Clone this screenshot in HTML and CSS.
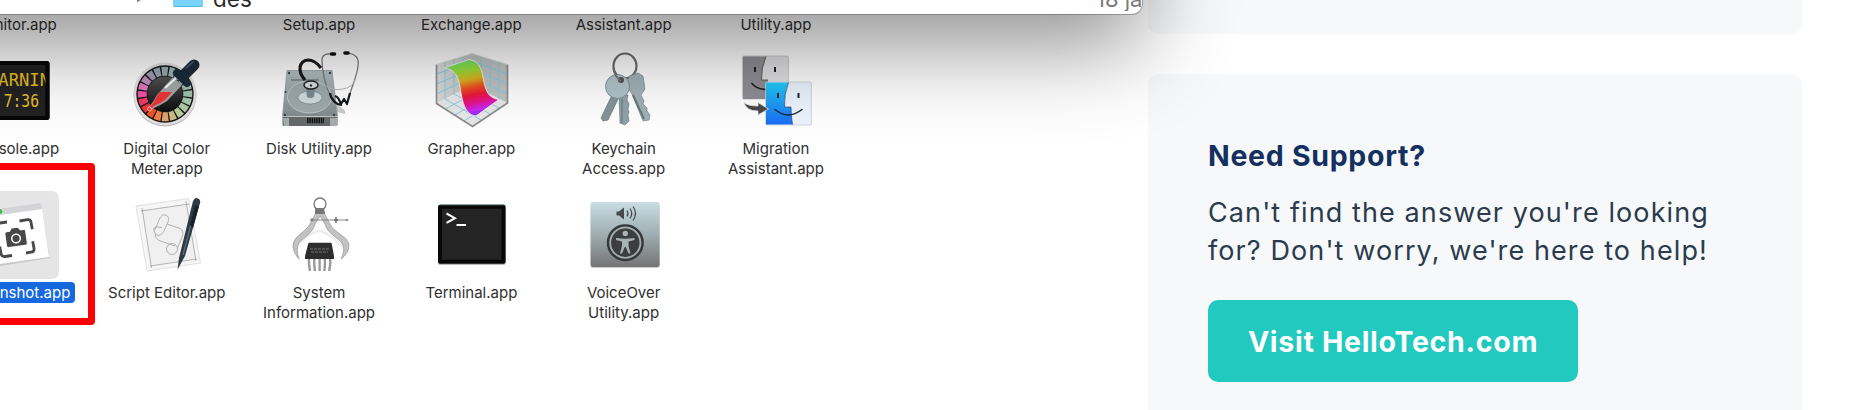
FILE: index.html
```
<!DOCTYPE html>
<html lang="en">
<head>
<meta charset="utf-8">
<title>Utilities</title>
<link rel="stylesheet" href="styles.css">
</head>
<body>
<div class="page">
<main class="article">
  <div class="window">
    <svg class="disclosure" viewBox="0 0 10 14"><path d="M0 0 10 7 0 14z" fill="#7f7f7f"/></svg>
    <span class="folder"></span>
    <span class="folder-name">des</span>
    <span class="folder-date">18 jan</span>
  </div>
  <div class="apps">
    <div class="app first"><span class="label">Activity<br>Monitor.app</span></div>
    <div class="app first"></div>
    <div class="app first"><span class="label">Boot Camp<br>Setup.app</span></div>
    <div class="app first"><span class="label">Bluetooth File<br>Exchange.app</span></div>
    <div class="app first"><span class="label">Boot Camp<br>Assistant.app</span></div>
    <div class="app first"><span class="label">ColorSync<br>Utility.app</span></div>

    <div class="app">
      <svg class="icon" viewBox="0 0 76 76">
        <rect x="6" y="10" width="67.5" height="59" rx="2" fill="#080808"/>
        <rect x="9" y="14" width="60.5" height="51" fill="#222"/>
        <g class="console-text" fill="#e8bf27">
          <text x="12" y="35" textLength="62" lengthAdjust="spacingAndGlyphs">WARNIN</text>
          <text x="10" y="56" textLength="53" lengthAdjust="spacingAndGlyphs">Y 7:36</text>
        </g>
        <path d="M69.500 12H73.500V67H69.500z" fill="#080808"/>
      </svg>
      <span class="label">Console.app</span>
    </div>
    <div class="app">
      <svg class="icon" viewBox="0 0 76 76">
        <defs>
          <circle id="seg" cx="36" cy="43" r="22.8" fill="none" stroke-width="9" pathLength="20" stroke-dasharray=".84 19.16" transform="rotate(-98 36 43)"/>
          <linearGradient id="dial" x1="0" y1="0" x2="0" y2="1"><stop offset="0" stop-color="#555"/><stop offset="1" stop-color="#0c0c0c"/></linearGradient>
        </defs>
        <circle cx="36" cy="44" r="31.5" fill="#b4b4b4"/>
        <circle cx="36" cy="43" r="31.5" fill="#e4e4e4"/>
        <circle cx="36" cy="43" r="28.7" fill="#151515"/>
        <use href="#seg" stroke="#9babb3"/>
        <use href="#seg" stroke="#9bb5b5" transform="rotate(18 36 43)"/>
        <use href="#seg" stroke="#9ebab3" transform="rotate(36 36 43)"/>
        <use href="#seg" stroke="#9ebab0" transform="rotate(54 36 43)"/>
        <use href="#seg" stroke="#a0c0b0" transform="rotate(72 36 43)"/>
        <use href="#seg" stroke="#a3c6b0" transform="rotate(90 36 43)"/>
        <use href="#seg" stroke="#a8ccb0" transform="rotate(108 36 43)"/>
        <use href="#seg" stroke="#b0cda6" transform="rotate(126 36 43)"/>
        <use href="#seg" stroke="#bccd9b" transform="rotate(144 36 43)"/>
        <use href="#seg" stroke="#ccbf84" transform="rotate(162 36 43)"/>
        <use href="#seg" stroke="#e3a46c" transform="rotate(180 36 43)"/>
        <use href="#seg" stroke="#f27f43" transform="rotate(198 36 43)"/>
        <use href="#seg" stroke="#f65229" transform="rotate(216 36 43)"/>
        <use href="#seg" stroke="#f43437" transform="rotate(234 36 43)"/>
        <use href="#seg" stroke="#f23a6c" transform="rotate(252 36 43)"/>
        <use href="#seg" stroke="#f752a4" transform="rotate(270 36 43)"/>
        <use href="#seg" stroke="#e078bc" transform="rotate(288 36 43)"/>
        <use href="#seg" stroke="#bd90bb" transform="rotate(306 36 43)"/>
        <use href="#seg" stroke="#a59bb5" transform="rotate(324 36 43)"/>
        <use href="#seg" stroke="#9ba3b4" transform="rotate(342 36 43)"/>
        <circle cx="36" cy="43" r="17.6" fill="url(#dial)"/>
        <path d="M44 26 53 34 38 50Q32 54 25 57L20 60 19 57Q24 52 28 44z" fill="#b9bcbc" opacity=".85"/>
        <path d="M31 41H43L37 48Q31 53 25 55L20 60 19 58Q25 52 28 45z" fill="#f13438"/>
        <path d="m36 37 11-10" stroke="#fff" stroke-width="2"/>
        <circle cx="20.500" cy="58" r="2" fill="#f13438" stroke="#ffd5d5" stroke-width=".8"/>
        <path d="m48 22 10 10" stroke="#1c2c3b" stroke-width="8" stroke-linecap="round"/>
        <path d="m54 25 11-11" stroke="#1c2c3b" stroke-width="11" stroke-linecap="round"/>
        <path d="m57 17 7-6" stroke="#4c6272" stroke-width="1.500" stroke-linecap="round"/>
      </svg>
      <span class="label">Digital Color<br>Meter.app</span>
    </div>
    <div class="app">
      <svg class="icon" viewBox="0 0 76 76">
        <defs><linearGradient id="disk" x1="0" y1="0" x2="0" y2="1"><stop offset="0" stop-color="#b3c0c4"/><stop offset="1" stop-color="#838c8e"/></linearGradient></defs>
        <path d="M56 54Q66 59 64 63L56 61z" fill="#ccc"/>
        <path d="M6 19.500H51L56.500 65H1.500z" fill="url(#disk)" stroke="#8b9496" stroke-width=".7"/>
        <path d="M1.500 65H56.500V74Q56.500 75 55 75H3Q1.500 75 1.500 74z" fill="#666a6b"/>
        <path d="M1.500 65.500H56.500" stroke="#bfc7c9" stroke-width="1"/>
        <path d="M2 67h6v8H3zM49 67h7v8h-7z" fill="#a8adae"/>
        <path d="M26 69.500H43" stroke="#111" stroke-width="5.500" stroke-dasharray="1.500 .8"/>
        <ellipse cx="28.500" cy="46" rx="22" ry="16" fill="#9fa9ab" stroke="#c7d0d2" stroke-width=".8"/>
        <path d="M10 29H38" stroke="#596669" stroke-width="1"/>
        <g fill="#38464c"><circle cx="8" cy="22" r="1.200"/><circle cx="49" cy="22" r="1.200"/><circle cx="4.500" cy="41" r="1"/><circle cx="4" cy="64" r="1.200"/><circle cx="53" cy="64" r="1.200"/></g>
        <ellipse cx="29" cy="46.500" rx="12" ry="6.500" fill="#d0dce1" stroke="#6d7a80" stroke-width=".6"/>
        <path d="M25 38H34L33 46Q29 48 26 46z" fill="#7b8b92"/>
        <ellipse cx="30" cy="34" rx="7" ry="4" fill="#d7dfe2" stroke="#222" stroke-width="1.400"/>
        <circle cx="30" cy="34.500" r="1.200" fill="#333"/>
        <path d="M24 29C16 20 18 10 27 9Q34 9 40 17" fill="none" stroke="#181b1c" stroke-width="3.200"/>
        <path d="M51 3Q41 2 41 9C41 19 44 34 49 44M66 2Q79 3 77 15C76 25 71 35 69 43" fill="none" stroke="#777" stroke-width="1.200"/>
        <path d="M45 35Q52 40 62 38T74 29" fill="none" stroke="#b5b5b5" stroke-width="1"/>
        <path d="M49 42C50 49 56 54 60 54Q58 46 54 45M60 53 63 48 66 53 69 42" fill="none" stroke="#181b1c" stroke-width="2.200" stroke-linejoin="round"/>
        <path d="M50.500 3h3M64 2h3" stroke="#111" stroke-width="3.600" stroke-linecap="round"/>
      </svg>
      <span class="label">Disk Utility.app</span>
    </div>
    <div class="app">
      <svg class="icon" viewBox="0 0 76 76">
        <defs>
          <linearGradient id="rainbow" x1=".35" y1="0" x2=".55" y2="1"><stop offset="0" stop-color="#68e86b"/><stop offset=".2" stop-color="#9fdc38"/><stop offset=".36" stop-color="#dcb51f"/><stop offset=".5" stop-color="#ef531f"/><stop offset=".64" stop-color="#ee163c"/><stop offset=".78" stop-color="#e51493"/><stop offset=".9" stop-color="#c32af0"/><stop offset="1" stop-color="#8d2df5"/></linearGradient>
          <linearGradient id="wall" x1="0" x2="1"><stop offset="0" stop-color="#dcdcdc"/><stop offset="1" stop-color="#c2c2c2"/></linearGradient>
        </defs>
        <path d="M39 2.500 3.500 13.500V52.500L39 34z" fill="url(#wall)"/>
        <path d="M39 2.500 74.500 13.500V52L39 34z" fill="#c2c2c2"/>
        <path d="M39 34 74.500 52 39.500 75.500 3.500 52.500z" fill="#e8e8e8"/>
        <path d="M12 11V48M21 8V43M30 5V39M48 5V39M57 8V43M66 11V48M3.500 23 39 10 74.500 23M3.500 33 39 18 74.500 33M3.500 43 39 26 74.500 43M12 58 48 39M22 64 57 43M31 70 66 48M30 39 66 57M21 43 57 63M12 48 48 69" fill="none" stroke="#84cfe4" stroke-width="1"/>
        <path d="M3.500 13.500V52.500L39.500 75.500 74.500 52V13.500" fill="none" stroke="#8c8c8c" stroke-width="1.600"/>
        <path d="M3.500 13.500 39 2.500 74.500 13.500" fill="none" stroke="#ddd"/>
        <path d="M11 17 36 8.500C48 10 49 21 51 31S56 47 66 48.500L43 65C31 64 29 48 27 36S21 18 11 17z" fill="url(#rainbow)" stroke="#f1eef2" stroke-width="1"/>
      </svg>
      <span class="label">Grapher.app</span>
    </div>
    <div class="app">
      <svg class="icon" viewBox="0 0 76 76">
        <ellipse cx="39" cy="15" rx="11.500" ry="12.500" fill="none" stroke="#6b6b6b" stroke-width="2.200"/>
        <path d="M26 44 15 67 17 70 22 69 32 48z" fill="#83959a" stroke="#58676b" stroke-width=".6"/>
        <path d="m43 25 9-3 5 3 2 13-4 6 3 6-1 3 4 4v3l3 4-1 5-6 1-11-27-5-7z" fill="#a1b2b6" stroke="#6d7d81" stroke-width=".6"/>
        <path d="m47 44 11 24" stroke="#66777b" stroke-width="2"/>
        <path d="M33 44h9l-1 5 2 4-1 5 1 3-1 3 1 6-4 4-5-2z" fill="#92a4a8" stroke="#647477" stroke-width=".6"/>
        <path d="M36 48v24" stroke="#657478" stroke-width="1"/>
        <circle cx="31.500" cy="35.500" r="12" fill="#b2c4ca" stroke="#71858b" stroke-width=".8"/>
        <circle cx="35" cy="29" r="3" fill="#4e5558"/>
        <path d="M27.500 17Q28 25 35 30" fill="none" stroke="#777" stroke-width="2"/>
      </svg>
      <span class="label">Keychain<br>Access.app</span>
    </div>
    <div class="app">
      <svg class="icon" viewBox="0 0 76 76">
        <defs><linearGradient id="finder" x1="0" y1="0" x2="0" y2="1"><stop offset="0" stop-color="#22cdfb"/><stop offset="1" stop-color="#1b6cf2"/></linearGradient></defs>
        <rect x="4.500" y="5" width="46" height="43" rx="1.500" fill="#e0e0e2" stroke="#bbb" stroke-width=".7"/>
        <path d="M5 5.500H28Q23 17 23.500 29H30L31 48H5z" fill="#8e8e94"/>
        <path d="M28 5.500Q23 17 23.500 29H30" fill="none" stroke="#444" stroke-width=".8"/>
        <path d="M17 16v5M37 16v5" stroke="#222" stroke-width="2"/>
        <path d="M13.500 32Q20 40 32 38" fill="none" stroke="#222" stroke-width="1.500"/>
        <rect x="27.700" y="31" width="45.600" height="43" rx="1" fill="#edf4fd" stroke="#c7cdd3" stroke-width=".8"/>
        <path d="M28 31.500H50.500Q46 43 46.500 56H53Q53 65 54.500 73.500H28z" fill="url(#finder)"/>
        <path d="M50.500 31.500Q46 43 46.500 56H53Q53 65 54.500 73.500" fill="none" stroke="#254b77" stroke-width=".7"/>
        <path d="M40 42v5M60.500 42v5" stroke="#13283c" stroke-width="2"/>
        <path d="M37 58.500Q50 69.500 64 58.500" fill="none" stroke="#13283c" stroke-width="1.500" stroke-linecap="round"/>
        <path d="M6 51.500Q10 55 20 55V51.500L30.500 58 20 64V60Q8 60 6 51.500z" fill="#4a4a4a" stroke="#e6e6e6" stroke-width=".8"/>
      </svg>
      <span class="label">Migration<br>Assistant.app</span>
    </div>

    <div class="app">
      <svg class="icon selected" viewBox="-1 2 78 76">
        <path d="M3 18 65.300 9 73.500 63 11 73z" fill="#aaa" opacity=".5"/>
        <path d="M3 16.500 65.300 7.700 73 62 11 71z" fill="#fff"/>
        <path d="M3 16.500 65.300 7.700 66.300 14 4 23z" fill="#d3d4d8"/>
        <circle cx="23.800" cy="16.500" r="2.500" fill="#27c840"/>
        <g fill="none" stroke="#484848" stroke-width="2.800">
          <path d="m43.500 26 8-1.300q3-.5 3.500 2.500l1.300 7M50 58l5-.8q3.500-.5 3-4l-1.300-7M36 60.500l-7 1q-3.500.5-4-3l-1.300-7M31 27l-7 1q-3.500.5-3 4l1.300 7"/>
        </g>
        <g transform="rotate(-8 40 43)" fill="#484848">
          <rect x="30" y="36" width="20" height="15" rx="1.500"/><path d="m34 37 3-4h6l3 4z"/>
          <circle cx="40" cy="43.500" r="4.300" fill="none" stroke="#fff" stroke-width="1.500"/>
        </g>
      </svg>
      <span class="label selected-label">Screenshot.app</span>
    </div>
    <div class="app">
      <svg class="icon" viewBox="0 0 76 76">
        <path d="M7 11 59.500 3.500 71.500 68 18 76z" fill="#f6f6f6" stroke="#dcdcdc" stroke-width=".9"/>
        <path d="M13 15.500 57.500 9 66.500 64 22 70.500z" fill="#f0f0f0"/>
        <path d="M12 16 60 9M21 71 68 64M13 13 22.500 73M57 6 67 66" stroke="#888" stroke-width=".6"/>
        <path d="M25.500 35.500 30.500 24C34 16 42 21 39 27L34.500 37M38 29 51 33.500Q55.500 36 53 42L48.500 53M34.500 37Q29 44 25.500 37T33 32.500M26 39Q26 43 30 45.500L46 51" fill="none" stroke="#a0a0a0" stroke-width=".8"/>
        <circle cx="43" cy="54" r="5.500" fill="none" stroke="#a0a0a0" stroke-width=".8"/>
        <path d="M48.500 74.500 50 63 64 6Q66 2 69 3.500T71 8L56 61z" fill="#2d3a43"/>
        <path d="M54 60 67 10" stroke="#5a6b78" stroke-width="1.300"/>
        <path d="m61 30 5-20 4 1-6 22z" fill="#18222a"/>
      </svg>
      <span class="label">Script Editor.app</span>
    </div>
    <div class="app">
      <svg class="icon" viewBox="0 0 76 76">
        <path d="M12 54Q30 36 38 36T68 57" fill="none" stroke="#eee" stroke-width="3"/>
        <circle cx="39" cy="9" r="6" fill="none" stroke="#777" stroke-width="1.300"/>
        <path d="M36 16 29 29C25 37 12 41 12 51Q12 58 18 64 14.500 54 18 48C23 42 32 38 34 29L39 21 44 29C46 38 56 42 61 48Q65 54 60 64 68 58 68 50C67 41 53 38 49 29L42 16z" fill="#c2c2c2" stroke="#959595" stroke-width=".7"/>
        <path d="M34 13h9l1 6h-10z" fill="#777"/>
        <path d="M30 25H67" stroke="#888" stroke-width="1"/><path d="M55 22v6M53 25h4" stroke="#666" stroke-width="1.400"/><circle cx="66" cy="25" r="1.300" fill="#999"/><circle cx="31" cy="25" r="1.800" fill="#888"/>
        <path d="M28 63v6l1 7M33.300 63v6l.5 7M38.600 63v13M43.900 63v6l-.5 7M49.200 63v6l-1 7" fill="none" stroke="#999" stroke-width="2.400"/>
        <path d="M27.500 47.700H50.500L53 61V64H24V61z" fill="#2d2d2d"/>
        <path d="M29 54H48M30 57H47" stroke="#777" stroke-width="1" stroke-dasharray="3 1"/>
      </svg>
      <span class="label">System<br>Information.app</span>
    </div>
    <div class="app">
      <svg class="icon" viewBox="0 0 76 76">
        <rect x="5" y="11" width="67.600" height="59" rx="2" fill="#bbb"/>
        <rect x="5" y="9.700" width="67.600" height="59" rx="2" fill="#080808"/>
        <path d="M7 10H71" stroke="#48666b" stroke-width=".8"/>
        <rect x="9" y="13.700" width="59.500" height="51" fill="#242424"/>
        <path d="m13.500 18.500 8.500 4.700-8.500 4.700M23.500 30H33" fill="none" stroke="#fff" stroke-width="2"/>
      </svg>
      <span class="label">Terminal.app</span>
    </div>
    <div class="app">
      <svg class="icon" viewBox="0 0 76 76">
        <defs><linearGradient id="vo" x1="0" y1="0" x2="0" y2="1"><stop offset="0" stop-color="#c9dde2"/><stop offset=".5" stop-color="#9faeb2"/><stop offset="1" stop-color="#747474"/></linearGradient></defs>
        <rect x="4.600" y="8" width="69" height="65" rx="2.500" fill="#ccc"/>
        <rect x="4.600" y="7" width="69" height="65" rx="2.500" fill="url(#vo)"/>
        <path d="M30.500 16.500H33L38 12.500V24.500L33 20.500H30.500z" fill="#454b4d"/>
        <path d="M41 15.500q2 3 0 6M44 13.500q3.500 5 0 10M47 11.500q5 7 0 14" fill="none" stroke="#454b4d" stroke-width="1.200"/>
        <circle cx="39.300" cy="47.700" r="17.300" fill="#a2abad" stroke="#343637" stroke-width="2.400"/>
        <circle cx="39.300" cy="47.700" r="14.200" fill="#3b3d3e"/>
        <circle cx="39.300" cy="38.500" r="2.700" fill="#a9b3b5"/>
        <path d="M30 43Q39 44.500 48.500 43V45L42.500 46.500V51L44.500 58.500H42.500L39.800 52H38.800L36 58.500H34L36 51V46.500L30 45z" fill="#a9b3b5"/>
      </svg>
      <span class="label">VoiceOver<br>Utility.app</span>
    </div>
  </div>
  <div class="highlight"></div>
</main>
<aside class="sidebar">
  <section class="card card-previous"></section>
  <section class="card support">
    <h2 class="support-title">Need Support?</h2>
    <p class="support-text">Can't find the answer you're looking<br>for? Don't worry, we're here to help!</p>
    <a class="button">Visit HelloTech.com</a>
  </section>
</aside>
</div>
</body>
</html>
```
FILE: styles.css
```
* { box-sizing: border-box; }
body { margin: 0; background: #fff; font-family: Inter, "Open Sans", sans-serif; }
.page { display: flex; width: 1856px; height: 410px; overflow: hidden; }
.article { position: relative; width: 1148px; flex: none; }
.window {
  position: relative; z-index: 2;
  display: flex; align-items: flex-end;
  width: 1342px; height: 600px; margin: -586px 0 0 -200px; padding-left: 337px;
  background: #fff; border-radius: 0 0 10px 10px;
  box-shadow: 0 0 0 1px rgba(0,0,0,.25), 0 30px 90px rgba(0,0,0,.45);
}
.disclosure { width: 8px; height: 14px; margin-bottom: 10px; }
.folder { width: 30px; height: 30px; margin: 0 0 7px 28px; background: #79d2fa; border-bottom: 1px solid #55b5df; border-radius: 2px; }
.folder-name { margin: 0 0 5px 10px; font-size: 22.500px; line-height: 20px; color: #2b2b2b; }
.folder-date { width: 46px; margin: 0 0 3px auto; overflow: hidden; white-space: nowrap; font-size: 22px; line-height: 24px; color: #7b7b7b; }
.apps {
  display: grid; grid-template-columns: repeat(6, 152.3px); grid-template-rows: 37px 144px 144px;
  margin-left: -61.7px;
}
.app { display: flex; flex-direction: column; align-items: center; }
.first { justify-content: flex-end; padding-bottom: 16px; height: 37px; }
.icon { display: block; flex: none; width: 76px; height: 76px; overflow: visible; }
.selected { width: 78px; margin-top: 2px; outline: 6.500px solid #e5e5e5; border-radius: 1px; background: #e5e5e5; }
.label { margin-top: 12px; text-align: center; font-size: 15px; line-height: 20px; color: #303030; white-space: nowrap; }
.selected-label { padding: 0 5px; color: #fff; background: #1668df; border-radius: 4px; line-height: 21px; margin-top: 9px; }
.console-text { font-family: "DejaVu Sans Mono", monospace; font-size: 17px; }
.highlight { position: absolute; left: -60px; top: 162.500px; width: 155px; height: 162px; border: 7px solid #fe0000; border-radius: 4px; }
.sidebar { display: flex; flex-direction: column; gap: 40px; width: 654px; flex: none; }
.card { background: #f7f8fa; border-radius: 10px; flex: none; }
.card-previous { height: 34px; border-radius: 0 0 10px 10px; }
.support { height: 376px; padding: 60px; border-radius: 10px 10px 0 0; }
.support-title { margin: 3px 0 0; font-size: 28.500px; line-height: 38px; font-weight: 700; letter-spacing: .7px; color: #14305f; white-space: nowrap; }
.support-text { margin: 19px 0 0; font-size: 27px; line-height: 38px; letter-spacing: 1.100px; color: #2a3b4d; white-space: nowrap; }
.button {
  display: flex; align-items: center; justify-content: center; width: 370px; height: 82px; margin-top: 30px;
  background: #22c9bf; border-radius: 10px; color: #fff; font-size: 28.500px; font-weight: 700; letter-spacing: .7px; white-space: nowrap;
}
```
